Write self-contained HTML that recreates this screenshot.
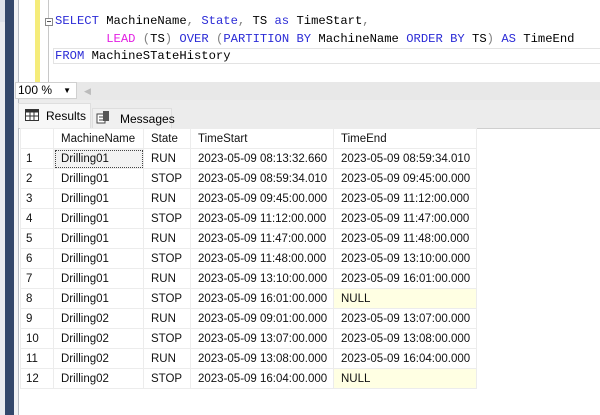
<!DOCTYPE html>
<html><head><meta charset="utf-8"><style>
*{margin:0;padding:0;box-sizing:border-box}
body{width:600px;height:415px;overflow:hidden;background:#fff;position:relative;font-family:"Liberation Sans",Arial,sans-serif}
.a{position:absolute}
.code{font-family:"Liberation Mono",monospace;font-size:12.2px;white-space:pre;line-height:17.5px}
.k{color:#2b2bd6}.m{color:#e21ee2}.g{color:#808080}
table{position:absolute;left:20px;top:128px;border-collapse:collapse;font-size:11.5px;color:#111}
td{height:20px;border:1px solid #ececec;padding:0 0 0 7px;white-space:nowrap;vertical-align:middle}
tr td:first-child{padding-left:5px}
.y{background:#ffffe3}
</style></head><body>
<div class="a" style="left:0;top:0;width:8px;height:22px;background:#dde1ea"></div>
<div class="a" style="left:0;top:22px;width:5px;height:393px;background:#e9ebf0"></div>
<div class="a" style="left:5px;top:0;width:9px;height:415px;background:#33476b"></div>
<div class="a" style="left:14px;top:0;width:4px;height:415px;background:#f1f2f5"></div>
<div class="a" style="left:18px;top:0;width:1px;height:415px;background:#b8bcc4"></div>
<div class="a" style="left:35px;top:0;width:5px;height:82px;background:#f5ec7a"></div>
<div class="a" style="left:48px;top:0;width:1px;height:82px;background:#c8c8c8"></div>
<div class="a" style="left:45px;top:18px;width:8px;height:8px;border:1px solid #888;background:#fff"></div>
<div class="a" style="left:47px;top:21px;width:4px;height:1px;background:#555"></div>
<div class="a" style="left:53px;top:48px;width:547px;height:16px;border:1px solid #e3e3e3;border-right:none"></div>
<div class="a code" style="left:55px;top:13px"><span class="k">SELECT</span> MachineName<span class="g">,</span> <span class="k">State</span><span class="g">,</span> TS <span class="k">as</span> TimeStart<span class="g">,</span>
       <span class="m">LEAD</span> <span class="g">(</span>TS<span class="g">)</span> <span class="k">OVER</span> <span class="g">(</span><span class="k">PARTITION BY</span> MachineName <span class="k">ORDER BY</span> TS<span class="g">)</span> <span class="k">AS</span> TimeEnd
<span class="k">FROM</span> MachineSTateHistory</div>
<div class="a" style="left:19px;top:82px;width:581px;height:18px;background:#e8e8e8"></div>
<div class="a" style="left:15px;top:82px;width:62px;height:17px;background:#fff;border:1px solid #d0d0d0;font-size:12px;line-height:15px;padding-left:2px">100 %<span style="position:absolute;right:5px;top:0;font-size:8px">▼</span></div>
<div class="a" style="left:84px;top:86px;font-size:9px;color:#bbb">◀</div>
<div class="a" style="left:19px;top:100px;width:581px;height:28px;background:#ececec"></div>
<div class="a" style="left:18px;top:103px;width:73px;height:25px;background:#f7f7f7;border:1px solid #dedede;border-bottom:none;font-size:12px;padding:5px 0 0 27px">Results</div>
<svg class="a" style="left:25px;top:109px" width="14" height="12"><rect x=".5" y=".5" width="13" height="11" fill="#fff" stroke="#333"/><rect x=".5" y=".5" width="13" height="3" fill="#333"/><path d="M5 1V12M9 1V12M1 7H13" stroke="#333"/></svg>
<div class="a" style="left:92px;top:108px;width:80px;height:20px;background:#f0f0f0;border:1px solid #dedede;border-bottom:none;font-size:12px;padding:3px 0 0 27px">Messages</div>
<svg class="a" style="left:96px;top:110px" width="14" height="14"><rect x="1" y="4" width="8" height="9" fill="#fff" stroke="#444"/><rect x="7" y="1" width="6" height="10" fill="#555"/><path d="M3 7h4M3 10h4" stroke="#444"/></svg>
<div class="a" style="left:19px;top:128px;width:581px;height:1px;background:#cfcfcf"></div>
<table>
<tr><td style="width:33px"></td><td style="width:90px">MachineName</td><td style="width:47px">State</td><td style="width:143px">TimeStart</td><td style="width:143px">TimeEnd</td></tr>
<tr><td>1</td><td style="outline:1px dotted #444;outline-offset:-2px;background:#f2f2f2">Drilling01</td><td>RUN</td><td>2023-05-09 08:13:32.660</td><td>2023-05-09 08:59:34.010</td></tr>
<tr><td>2</td><td>Drilling01</td><td>STOP</td><td>2023-05-09 08:59:34.010</td><td>2023-05-09 09:45:00.000</td></tr>
<tr><td>3</td><td>Drilling01</td><td>RUN</td><td>2023-05-09 09:45:00.000</td><td>2023-05-09 11:12:00.000</td></tr>
<tr><td>4</td><td>Drilling01</td><td>STOP</td><td>2023-05-09 11:12:00.000</td><td>2023-05-09 11:47:00.000</td></tr>
<tr><td>5</td><td>Drilling01</td><td>RUN</td><td>2023-05-09 11:47:00.000</td><td>2023-05-09 11:48:00.000</td></tr>
<tr><td>6</td><td>Drilling01</td><td>STOP</td><td>2023-05-09 11:48:00.000</td><td>2023-05-09 13:10:00.000</td></tr>
<tr><td>7</td><td>Drilling01</td><td>RUN</td><td>2023-05-09 13:10:00.000</td><td>2023-05-09 16:01:00.000</td></tr>
<tr><td>8</td><td>Drilling01</td><td>STOP</td><td>2023-05-09 16:01:00.000</td><td class="y">NULL</td></tr>
<tr><td>9</td><td>Drilling02</td><td>RUN</td><td>2023-05-09 09:01:00.000</td><td>2023-05-09 13:07:00.000</td></tr>
<tr><td>10</td><td>Drilling02</td><td>STOP</td><td>2023-05-09 13:07:00.000</td><td>2023-05-09 13:08:00.000</td></tr>
<tr><td>11</td><td>Drilling02</td><td>RUN</td><td>2023-05-09 13:08:00.000</td><td>2023-05-09 16:04:00.000</td></tr>
<tr><td>12</td><td>Drilling02</td><td>STOP</td><td>2023-05-09 16:04:00.000</td><td class="y">NULL</td></tr>
</table>
</body></html>
